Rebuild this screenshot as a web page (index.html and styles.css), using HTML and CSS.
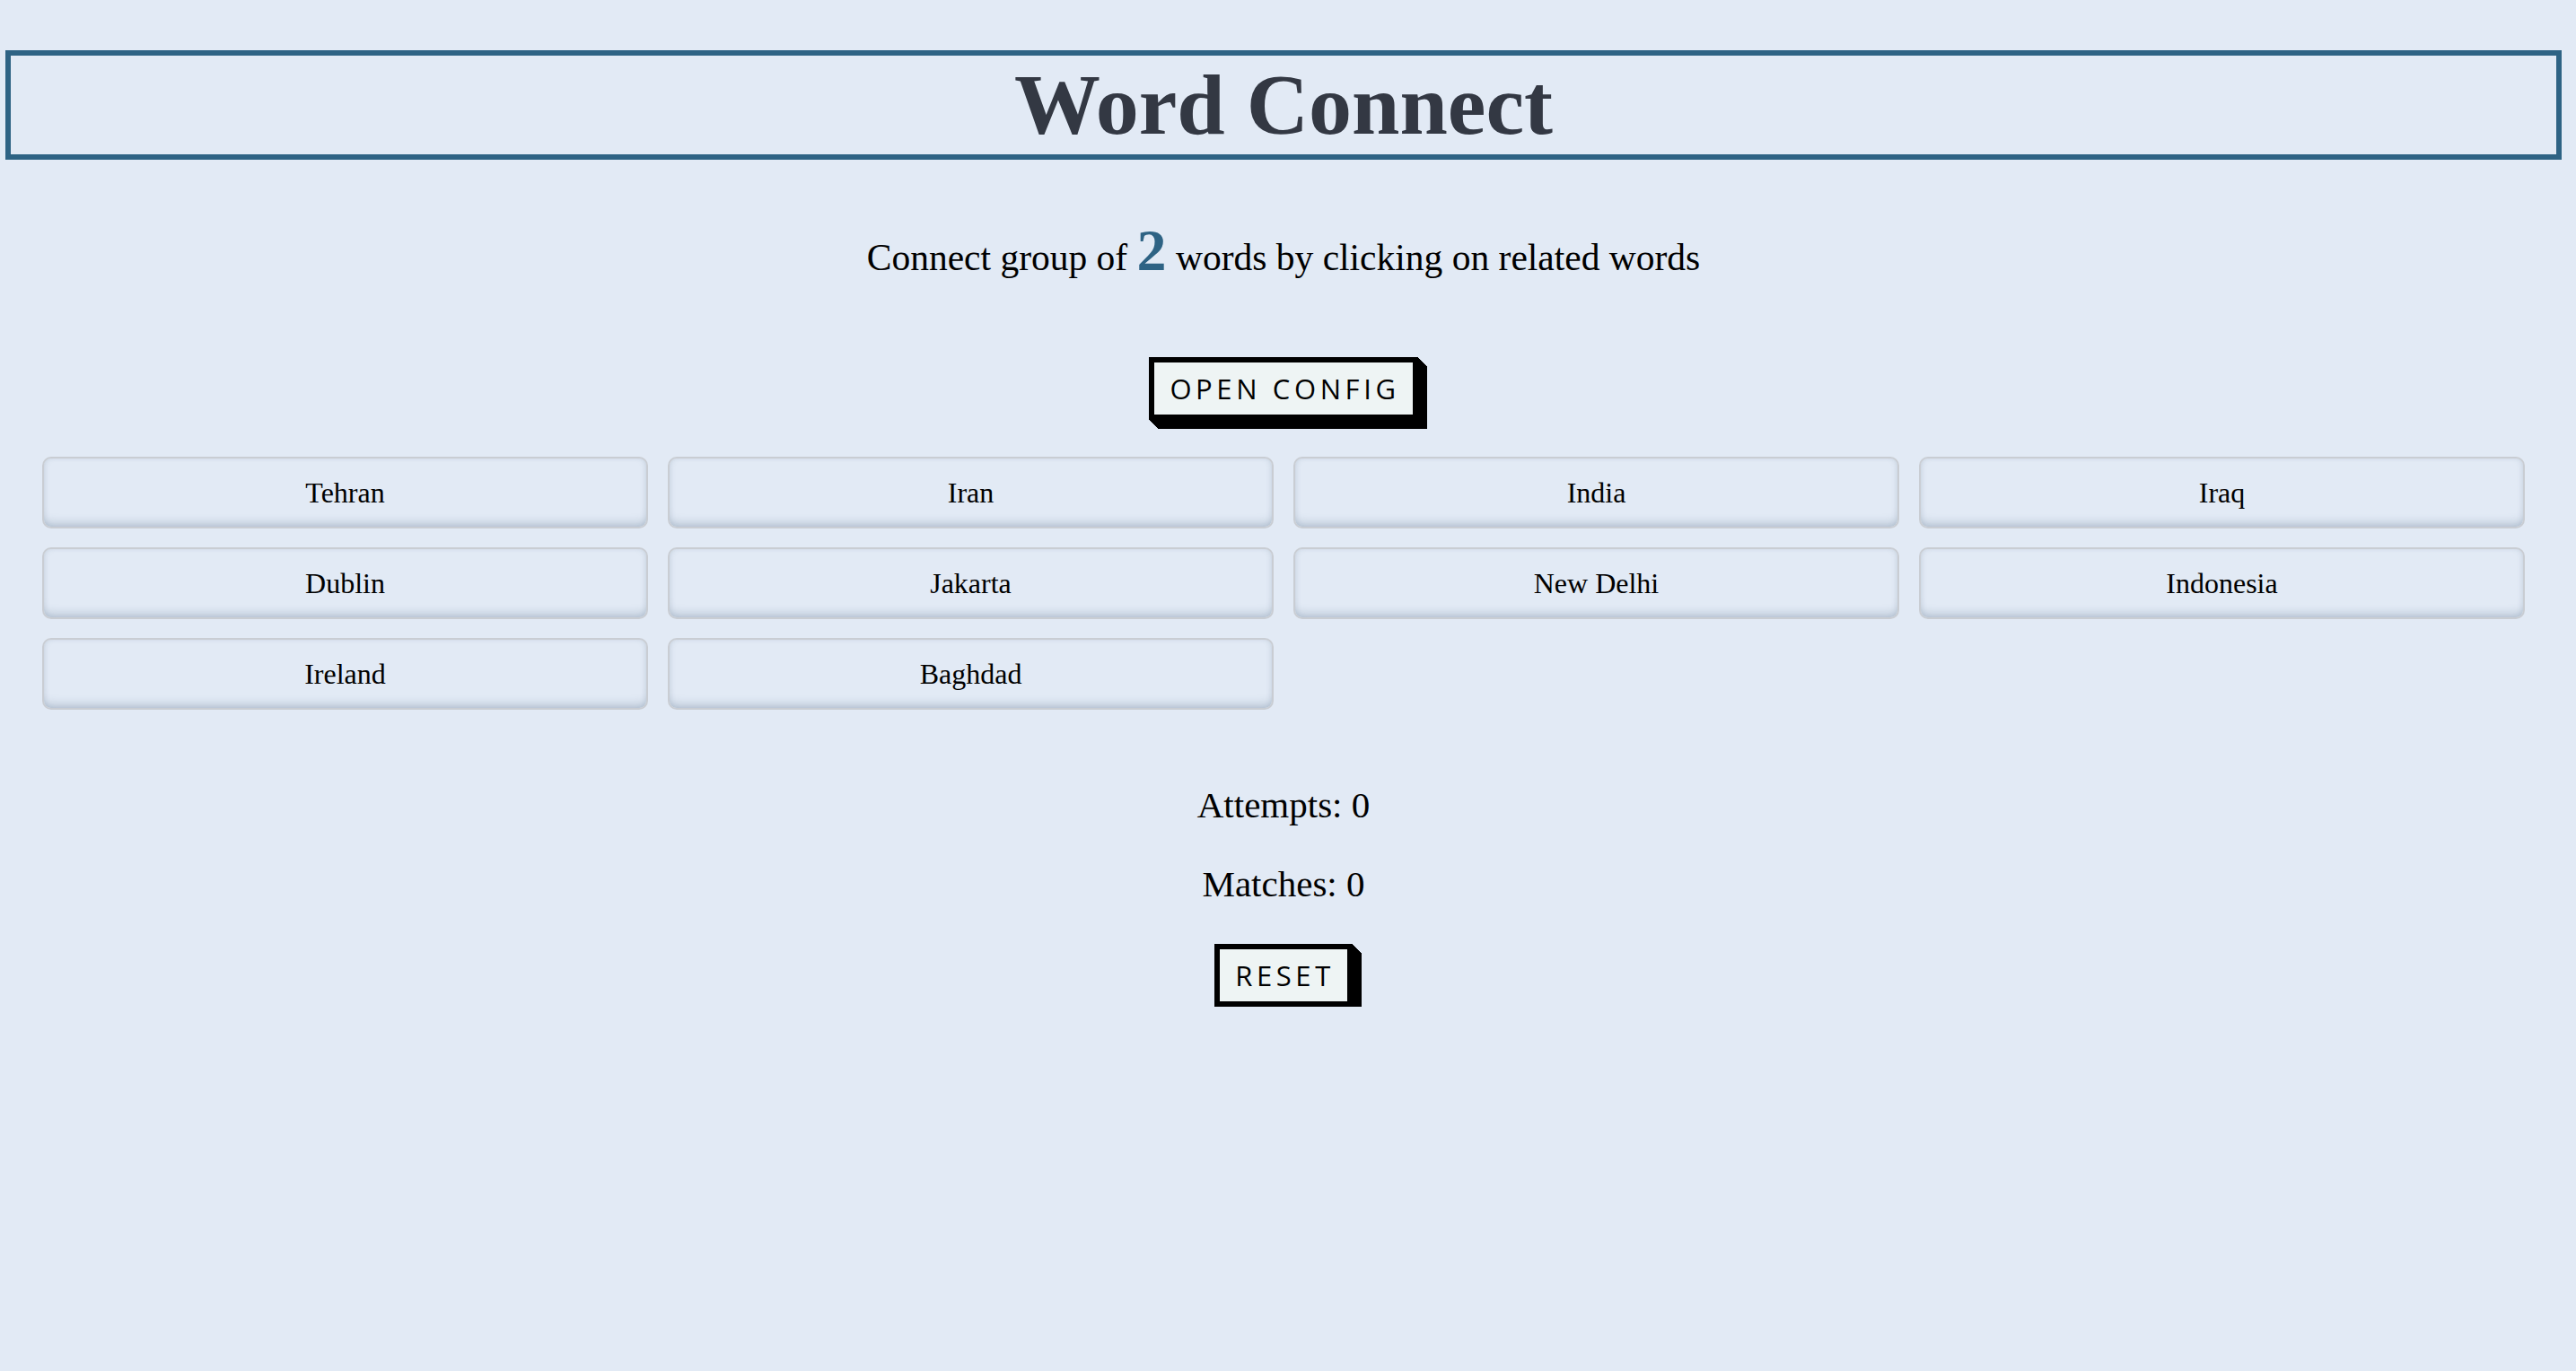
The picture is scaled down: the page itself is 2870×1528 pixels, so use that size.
FILE: index.html
```html
<!DOCTYPE html>
<html lang="en">
<head>
<meta charset="utf-8">
<title>Word Connect</title>
<link rel="stylesheet" href="styles.css">
</head>
<body>
<main class="app">
  <header class="header">
    <h1 class="title">Word Connect</h1>
  </header>
  <p class="subtitle">Connect group of <span class="count">2</span> words by clicking on related words</p>
  <div class="actions">
    <button class="btn3d" type="button">OPEN CONFIG</button>
  </div>
  <section class="grid">
    <button class="tile" type="button">Tehran</button>
    <button class="tile" type="button">Iran</button>
    <button class="tile" type="button">India</button>
    <button class="tile" type="button">Iraq</button>
    <button class="tile" type="button">Dublin</button>
    <button class="tile" type="button">Jakarta</button>
    <button class="tile" type="button">New Delhi</button>
    <button class="tile" type="button">Indonesia</button>
    <button class="tile" type="button">Ireland</button>
    <button class="tile" type="button">Baghdad</button>
  </section>
  <section class="stats">
    <p class="stat">Attempts: 0</p>
    <p class="stat">Matches: 0</p>
  </section>
  <div class="actions reset-row">
    <button class="btn3d" type="button">RESET</button>
  </div>
</main>
</body>
</html>
```
FILE: styles.css
```css
html, body {
  margin: 0;
  padding: 0;
  background: #e2eaf5;
}

body {
  font-family: "Liberation Serif", "Times New Roman", serif;
  color: #000;
}

.app {
  width: 2848px;
  margin: 0 0 0 6px;
  padding-top: 56px;
  display: flex;
  flex-direction: column;
  align-items: stretch;
}

.header {
  border: 6px solid #2e6384;
  text-align: center;
}

.title {
  margin: 0;
  font-size: 96px;
  line-height: 110px;
  font-weight: bold;
  color: #333843;
}

.subtitle {
  margin: 79px 0 0;
  text-align: center;
  font-size: 41.5px;
  line-height: 60px;
}

.count {
  font-size: 66px;
  line-height: 0;
  font-weight: bold;
  color: #2e6384;
}

.actions {
  display: flex;
  justify-content: center;
  margin-top: 81px;
}

.btn3d {
  font-family: "Open Sans", "Noto Sans", sans-serif;
  font-size: 31px;
  letter-spacing: 4.6px;
  line-height: 46px;
  height: 70px;
  padding: 6px 14px 6px 17px;
  border: 6px solid #000;
  border-radius: 0;
  background: #eef4f4;
  color: #000;
  box-shadow:
    1px 1px 0 #000, 2px 2px 0 #000, 3px 3px 0 #000, 4px 4px 0 #000,
    5px 5px 0 #000, 6px 6px 0 #000, 7px 7px 0 #000, 8px 8px 0 #000,
    9px 9px 0 #000, 10px 10px 0 #000;
  cursor: pointer;
}

.grid {
  margin-top: 41px;
  padding: 0 41px;
  display: grid;
  grid-template-columns: repeat(4, 675px);
  column-gap: 22px;
  row-gap: 21px;
}

.tile {
  height: 80px;
  font-family: "Liberation Serif", "Times New Roman", serif;
  font-size: 32px;
  color: #000;
  background: #e2eaf5;
  border: 2px solid #c9cdd3;
  border-radius: 10px;
  box-shadow:
    inset 0 -10px 10px -5px rgba(70, 95, 125, 0.22),
    inset 3px 0 6px -2px rgba(70, 95, 125, 0.12),
    inset -3px 0 6px -2px rgba(70, 95, 125, 0.12);
  cursor: pointer;
}

.stats {
  margin-top: 83px;
  text-align: center;
}

.stat {
  margin: 0 0 41px;
  font-size: 41px;
  line-height: 47px;
}

.stat:last-child {
  margin-bottom: 0;
}

.reset-row {
  margin-top: 43px;
}
```
